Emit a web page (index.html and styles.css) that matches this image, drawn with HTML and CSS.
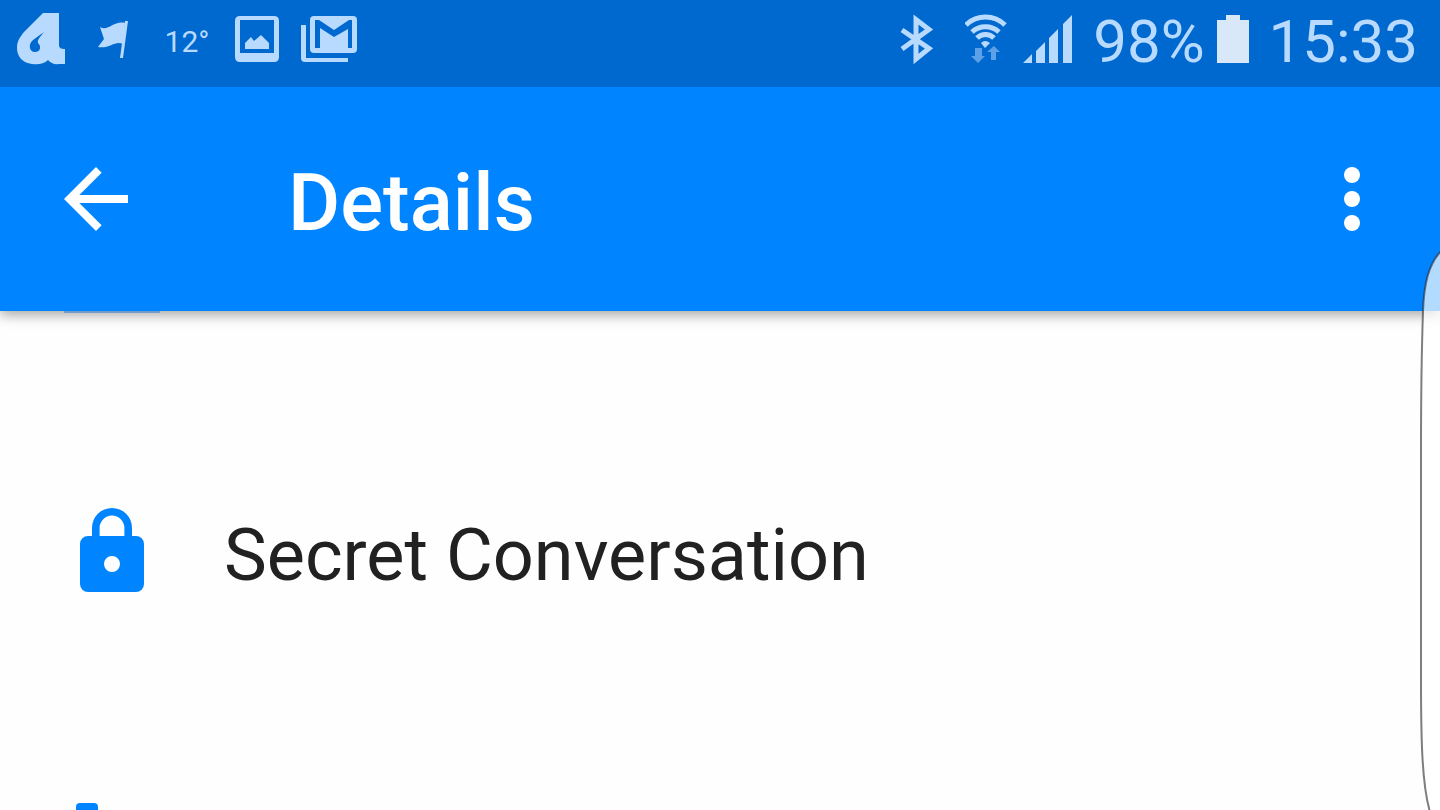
FILE: index.html
```html
<!DOCTYPE html>
<html lang="en">
<head>
    <meta charset="UTF-8">
    <meta name="viewport" content="width=device-width, initial-scale=1.0">
    <title>Details</title>
    <link rel="stylesheet" href="styles.css">
</head>
<body>
    <div class="status-bar">
        <div class="notifications">
            <svg class="icon" viewBox="0 0 56 56" aria-hidden="true">
                <path fill-rule="evenodd" d="M30 1H46V33C46 36 48 37 52 37V52H46Q39 53 35 48C31 52 25 53 19 52C9 51 4 44 4 36C4 29 7 25 11 20ZM31 20L20 28C15 32 16 40 22 40C27 40 29 35 25 31C24 28 27 25 31 20Z"/>
            </svg>
            <svg class="icon" viewBox="0 0 56 56" aria-hidden="true">
                <path d="M15 15C23 20 29 8 40 11L38 32C30 28 25 37 13 35L19 27Z"/>
                <path d="M40 9H43L38 46H35Z"/>
            </svg>
            <span class="temperature">12°</span>
            <svg class="icon" viewBox="0 0 56 56" aria-hidden="true">
                <path fill-rule="evenodd" d="M11 4H45Q50 4 50 9V45Q50 50 45 50H11Q6 50 6 45V9Q6 4 11 4ZM11 8V41H45V8Z"/>
                <path d="M16 37V31L22 25L25 29L32 23L40 31V37Z"/>
            </svg>
            <svg class="icon" viewBox="0 0 56 56" aria-hidden="true">
                <path d="M0 13H5V46H47V50H4Q0 50 0 46Z"/>
                <rect x="9" y="4" width="47" height="37" rx="4"/>
                <path class="cutout" d="M14 36V8H18L33 18L48 8H51V36H47V17L33 25L19 16V36Z"/>
            </svg>
        </div>
        <div class="system">
            <svg class="icon" viewBox="0 0 56 56" aria-hidden="true">
                <path class="line" d="M5 18L32 36.500L19 47V7.500L32 17.500L5 37"/>
            </svg>
            <svg class="icon wifi" viewBox="0 0 44 56" aria-hidden="true">
                <path class="line" d="M1 13A28 28 0 0 1 40 13M7 20A20 20 0 0 1 34 20M12 26A12 12 0 0 1 29 26"/>
                <path d="M16 31Q20 27 25 31L20 36Z"/>
                <path class="faded" d="M10 36H17V44H20L13 51L6 44H10ZM26 48V40H22L29 34L35 40H31V48Z"/>
            </svg>
            <svg class="icon signal" viewBox="0 0 60 56" aria-hidden="true">
                <path d="M2 51L11 42V51ZM15 51V39L24 30V51ZM28 51V26L37 17V51ZM42 51V12L51 3V51Z"/>
            </svg>
            <span class="status-text">98%</span>
            <svg class="icon battery" viewBox="0 0 40 56" aria-hidden="true">
                <path d="M9 3H23V8H32V51H0V8H9Z"/>
            </svg>
            <span class="status-text">15:33</span>
        </div>
    </div>

    <header class="toolbar">
        <button class="icon-btn" type="button" aria-label="Back">
            <svg viewBox="0 0 24 24"><path d="M20 11H7.830l5.590-5.590L12 4l-8 8 8 8 1.410-1.410L7.830 13H20z"/></svg>
        </button>
        <h1>Details</h1>
        <button class="icon-btn" type="button" aria-label="More options">
            <svg viewBox="0 0 24 24">
                <circle cx="12" cy="6" r="2"/>
                <circle cx="12" cy="12" r="2"/>
                <circle cx="12" cy="18" r="2"/>
            </svg>
        </button>
    </header>

    <main>
        <div class="scrolled-item"></div>
        <ul class="options">
            <li>
                <button class="option" type="button">
                    <svg viewBox="0 0 24 24" aria-hidden="true">
                        <path fill-rule="evenodd" d="M18 8h-1V6A5 5 0 0 0 7 6v2H6a2 2 0 0 0-2 2v10a2 2 0 0 0 2 2h12a2 2 0 0 0 2-2V10a2 2 0 0 0-2-2ZM8.900 8V6a3.100 3.100 0 0 1 6.200 0v2ZM12 17a2 2 0 1 1 0-4 2 2 0 0 1 0 4Z"/>
                    </svg>
                    <span>Secret Conversation</span>
                </button>
            </li>
            <li>
                <button class="option" type="button" aria-label="Next option">
                    <svg viewBox="0 0 96 96" aria-hidden="true">
                        <rect x="12" y="43" width="22" height="48" rx="4"/>
                    </svg>
                </button>
            </li>
        </ul>
    </main>

    <!-- handle of the edge panel -->
    <svg class="edge-panel" viewBox="0 0 20 560" preserveAspectRatio="xMaxYMin slice" aria-hidden="true">
        <path d="M22 0C8 14 4 35 3 61C2 90 1 130 1 200V430C1 490 2 535 10 562L22 600"/>
    </svg>
</body>
</html>
```
FILE: styles.css
```css
* {
    margin: 0;
    padding: 0;
    box-sizing: border-box;
}

body {
    display: flex;
    flex-direction: column;
    height: 100vh;
    overflow: hidden;
    background: #fefefe;
    color: #212121;
    font-family: Roboto, sans-serif;
}

button {
    border: none;
    background: none;
    color: inherit;
    font: inherit;
    cursor: pointer;
}

svg {
    display: block;
    flex-shrink: 0;
    fill: currentColor;
}

.status-bar {
    position: relative;
    z-index: 2;
    display: flex;
    flex-shrink: 0;
    justify-content: space-between;
    padding: 12px 22px 15px 13px;
    background: #0069d0;
    color: #b8daff;
}

.notifications,
.system {
    display: flex;
    align-items: flex-start;
}

.notifications {
    gap: 16px;
}

.system {
    gap: 12px;
}

.icon {
    width: 56px;
    height: 56px;
}

.wifi {
    width: 44px;
}

.signal {
    width: 60px;
}

.battery {
    width: 40px;
    color: #d8e8f8;
}

.line {
    fill: none;
    stroke: currentColor;
    stroke-width: 5;
}

.faded {
    opacity: 0.5;
}

.cutout {
    fill: #0069d0;
}

.temperature {
    width: 60px;
    margin-right: -4px;
    text-align: center;
    font-size: 30px;
    line-height: 60px;
}

.status-text {
    font-size: 60px;
    line-height: 60px;
}

.toolbar {
    position: relative;
    z-index: 1;
    display: flex;
    flex-shrink: 0;
    align-items: center;
    height: 224px;
    padding: 0 40px 0 48px;
    background: #0084ff;
    color: #fff;
    box-shadow: 0 4px 12px rgba(0, 0, 0, 0.35);
}

.toolbar h1 {
    flex: 1;
    padding: 8px 0 0 144px;
    font-size: 80px;
    font-weight: 500;
    line-height: 96px;
}

.icon-btn svg,
.option svg {
    width: 96px;
    height: 96px;
}

main {
    flex: 1;
    min-height: 0;
    overflow: hidden;
}

.scrolled-item {
    width: 96px;
    height: 2px;
    margin-left: 64px;
    background: #99ccff;
}

.options {
    padding-top: 111px;
    list-style: none;
}

.option {
    display: flex;
    align-items: center;
    gap: 64px;
    width: 100%;
    height: 256px;
    padding: 0 64px;
    text-align: left;
}

.option svg {
    color: #0084ff;
}

.option span {
    padding-top: 8px;
    font-size: 72px;
    line-height: 88px;
}

.edge-panel {
    position: fixed;
    z-index: 3;
    top: 250px;
    right: 0;
    width: 20px;
    height: calc(100vh - 250px);
    fill: rgba(255, 255, 255, 0.7);
    stroke: rgba(40, 40, 40, 0.6);
    stroke-width: 2;
}
```
